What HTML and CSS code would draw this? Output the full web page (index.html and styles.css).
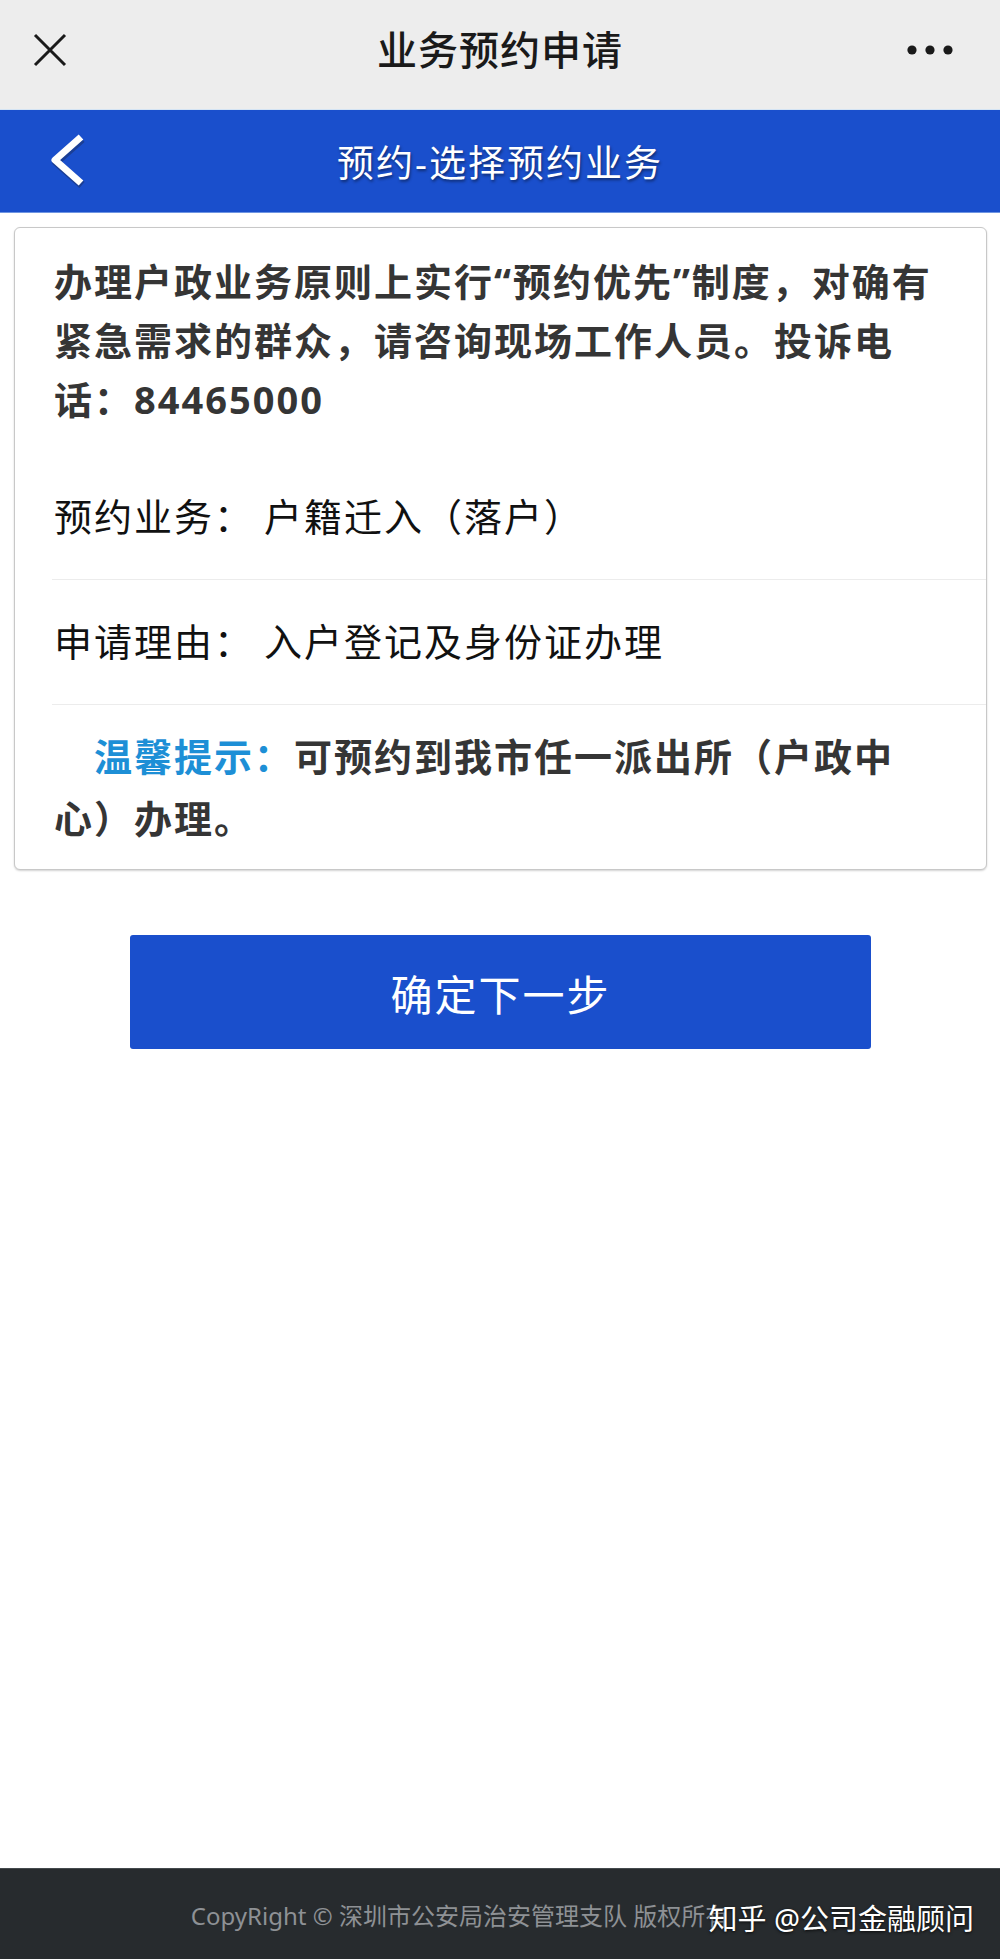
FILE: index.html
```html
<!DOCTYPE html>
<html lang="zh-CN">
  <head>
    <meta charset="UTF-8" />
    <meta name="viewport" content="width=device-width, initial-scale=1.0" />
    <title>业务预约申请</title>
    <link rel="stylesheet" href="styles.css">
  </head>
  <body>
    <header class="topbar">
      <span class="close">
        <svg width="36" height="36" viewBox="0 0 36 36">
          <path d="M3 3 L33 33 M33 3 L3 33" stroke="#1a1a1a" stroke-width="3" fill="none" />
        </svg>
      </span>
      <h1>业务预约申请</h1>
      <span class="more">
        <svg width="61" height="10" viewBox="0 0 61 10">
          <circle cx="5" cy="5" r="4.6" fill="#1a1a1a" />
          <circle cx="23" cy="5" r="4.6" fill="#1a1a1a" />
          <circle cx="41" cy="5" r="4.6" fill="#1a1a1a" />
        </svg>
      </span>
    </header>

    <div class="navbar">
      <a class="back" href="#">
        <svg width="44" height="56" viewBox="0 0 44 56">
          <path d="M35 5 L9 28 L35 51" stroke="#1b2a55" stroke-opacity="0.45" stroke-width="8" fill="none" stroke-linejoin="round" transform="translate(1,2)" />
          <path d="M35 5 L9 28 L35 51" stroke="#ffffff" stroke-width="7" fill="none" stroke-linejoin="round" />
        </svg>
      </a>
      <h2>预约-选择预约业务</h2>
    </div>

    <main class="page">
      <section class="card">
        <p class="notice">办理户政业务原则上实行“预约优先”制度，对确有紧急需求的群众，请咨询现场工作人员。投诉电话：84465000</p>
        <ul class="fields">
          <li><span class="label">预约业务：</span><span class="value">户籍迁入（落户）</span></li>
          <li><span class="label">申请理由：</span><span class="value">入户登记及身份证办理</span></li>
        </ul>
        <p class="tip"><span class="tip-label">温馨提示：</span>可预约到我市任一派出所（户政中心）办理。</p>
      </section>
      <button class="next">确定下一步</button>
    </main>

    <footer class="footer">
      <span class="copy">CopyRight © 深圳市公安局治安管理支队 版权所有</span>
      <span class="watermark">知乎 @公司金融顾问</span>
    </footer>
  </body>
</html>
```

FILE: styles.css
```css
:root {
  --blue: #1a4fcc;
  --tip-blue: #1d8fd6;
  --bar-bg: #ededed;
  --text: #353535;
  --footer-bg: #272b2e;
}
* {
  box-sizing: border-box;
}
html,
body {
  margin: 0;
  padding: 0;
  width: 100%;
}
body {
  min-height: 1959px;
  display: flex;
  flex-direction: column;
  background: #ffffff;
  color: #111;
  font-family: "Noto Sans", "Noto Sans CJK SC", sans-serif;
}
.topbar {
  height: 110px;
  padding: 0 32px 10px;
  display: grid;
  grid-template-columns: 1fr auto 1fr;
  align-items: center;
  background: var(--bar-bg);
  border-bottom: 1px solid #d4e4f4;
}
.topbar h1 {
  margin: 0;
  font-size: 40px;
  font-weight: 500;
  letter-spacing: 1px;
  color: #1a1a1a;
  line-height: 1;
}
.close,
.more {
  display: flex;
}
.more {
  justify-content: flex-end;
}
.navbar {
  position: relative;
  height: 103px;
  background: var(--blue);
  border-bottom: 1px solid #6f95e2;
  display: flex;
  align-items: center;
  justify-content: center;
}
.navbar h2 {
  margin: 0;
  color: #fff;
  font-size: 37px;
  font-weight: 400;
  letter-spacing: 2px;
  text-shadow: 1px 2px 3px rgba(0, 0, 0, 0.45);
}
.back {
  position: absolute;
  left: 46px;
  top: 22px;
  display: flex;
}
.page {
  padding: 14px 13px 0 14px;
}
.card {
  border: 1px solid #c8c8c8;
  border-radius: 6px;
  box-shadow: 0 1px 2px rgba(0, 0, 0, 0.18);
  background: #fff;
}
.notice {
  margin: 0;
  padding: 24px 53px 0 39px;
  font-size: 38px;
  line-height: 59px;
  letter-spacing: 2px;
  font-weight: 700;
  color: var(--text);
}
.fields {
  list-style: none;
  margin: 26px 0 0 37px;
  padding: 0;
}
.fields li {
  height: 125px;
  padding-left: 2px;
  display: flex;
  align-items: center;
  border-bottom: 1px solid #ececec;
  font-size: 38px;
  line-height: 1.2;
  letter-spacing: 2px;
  color: #111;
}
.value {
  margin-left: 10px;
}
.tip {
  margin: 0;
  padding: 20px 53px 20px 39px;
  text-indent: 40px;
  font-size: 38px;
  line-height: 62px;
  letter-spacing: 2px;
  font-weight: 700;
  color: var(--text);
}
.tip-label {
  color: var(--tip-blue);
}
.next {
  display: block;
  width: 741px;
  height: 114px;
  margin: 65px auto 0;
  border: none;
  border-radius: 3px;
  background: var(--blue);
  color: #fff;
  font-family: inherit;
  font-size: 42px;
  letter-spacing: 2px;
  cursor: pointer;
}
.footer {
  position: relative;
  margin-top: auto;
  height: 91px;
  background: var(--footer-bg);
  border-top: 1px solid #444a4e;
  display: flex;
  align-items: center;
  justify-content: center;
  padding: 0 80px 0 0;
}
.copy {
  color: #8e9195;
  font-size: 24px;
}
.watermark {
  position: absolute;
  right: 26px;
  top: 27px;
  color: #fff;
  font-size: 29px;
  text-shadow: 0 1px 3px rgba(0, 0, 0, 0.8);
}
```
